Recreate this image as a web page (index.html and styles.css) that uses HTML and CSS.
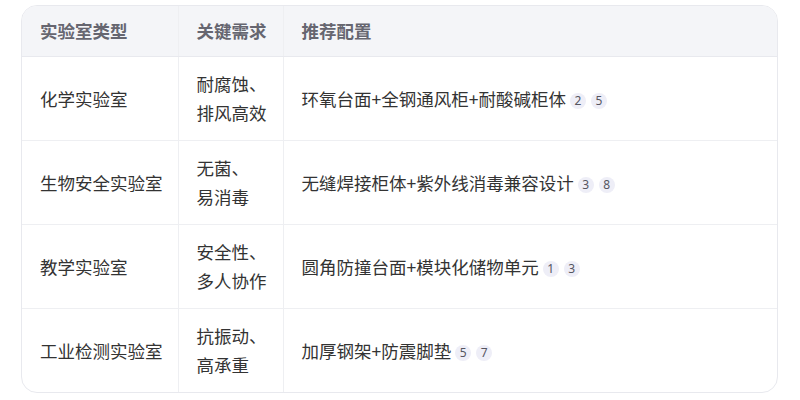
FILE: index.html
```html
<!DOCTYPE html>
<html lang="zh">
<head>
<meta charset="utf-8">
<link rel="stylesheet" href="styles.css">
</head>
<body>
<div class="wrap">
  <table class="tbl">
    <thead>
      <tr>
        <th class="c1">实验室类型</th>
        <th class="c2">关键需求</th>
        <th class="c3">推荐配置</th>
      </tr>
    </thead>
    <tbody>
      <tr>
        <td>化学实验室</td>
        <td><span class="ln">耐腐蚀、</span><span class="ln">排风高效</span></td>
        <td>环氧台面+全钢通风柜+耐酸碱柜体<span class="refs"><span class="badge">2</span><span class="badge">5</span></span></td>
      </tr>
      <tr>
        <td>生物安全实验室</td>
        <td><span class="ln">无菌、</span><span class="ln">易消毒</span></td>
        <td>无缝焊接柜体+紫外线消毒兼容设计<span class="refs"><span class="badge">3</span><span class="badge">8</span></span></td>
      </tr>
      <tr>
        <td>教学实验室</td>
        <td><span class="ln">安全性、</span><span class="ln">多人协作</span></td>
        <td>圆角防撞台面+模块化储物单元<span class="refs"><span class="badge">1</span><span class="badge">3</span></span></td>
      </tr>
      <tr>
        <td>工业检测实验室</td>
        <td><span class="ln">抗振动、</span><span class="ln">高承重</span></td>
        <td>加厚钢架+防震脚垫<span class="refs"><span class="badge">5</span><span class="badge">7</span></span></td>
      </tr>
    </tbody>
  </table>
</div>
</body>
</html>
```

FILE: styles.css
```css
html, body {
  margin: 0;
  padding: 0;
  background: #ffffff;
}
body {
  font-family: "Noto Sans CJK SC", "Noto Sans", sans-serif;
  color: #333333;
}
.wrap {
  margin: 5px 21px 0 21px;
  width: 757px;
  border: 1px solid #e8e9ee;
  border-radius: 16px;
  overflow: hidden;
  box-sizing: border-box;
}
.tbl {
  width: 100%;
  border-collapse: collapse;
  table-layout: fixed;
  font-size: 17.5px;
}
.tbl th {
  background: #f4f5f8;
  color: #666670;
  font-weight: 700;
  text-align: left;
  height: 50px;
  padding: 0 0 0 18px;
  box-sizing: border-box;
  border-bottom: 1px solid #e8e9ee;
  line-height: 24px;
  white-space: nowrap;
}
.tbl th + th,
.tbl td + td {
  border-left: 1px solid #eeeff2;
}
.c1 { width: 156px; }
.c2 { width: 105px; }
.tbl td {
  height: 84px;
  padding: 12px 0 12px 18px;
  box-sizing: border-box;
  line-height: 29px;
  vertical-align: middle;
  white-space: nowrap;
}
.tbl tbody tr + tr td {
  border-top: 1px solid #eeeff2;
}
.ln {
  display: block;
}
.refs {
  display: inline-flex;
  gap: 5px;
  margin-left: 4px;
  vertical-align: 1px;
}
.badge {
  display: inline-flex;
  align-items: center;
  justify-content: center;
  width: 16px;
  height: 16px;
  border-radius: 50%;
  background: #eeeef7;
  color: #555560;
  font-family: "Noto Sans", sans-serif;
  font-size: 12px;
  line-height: 1;
}
```
